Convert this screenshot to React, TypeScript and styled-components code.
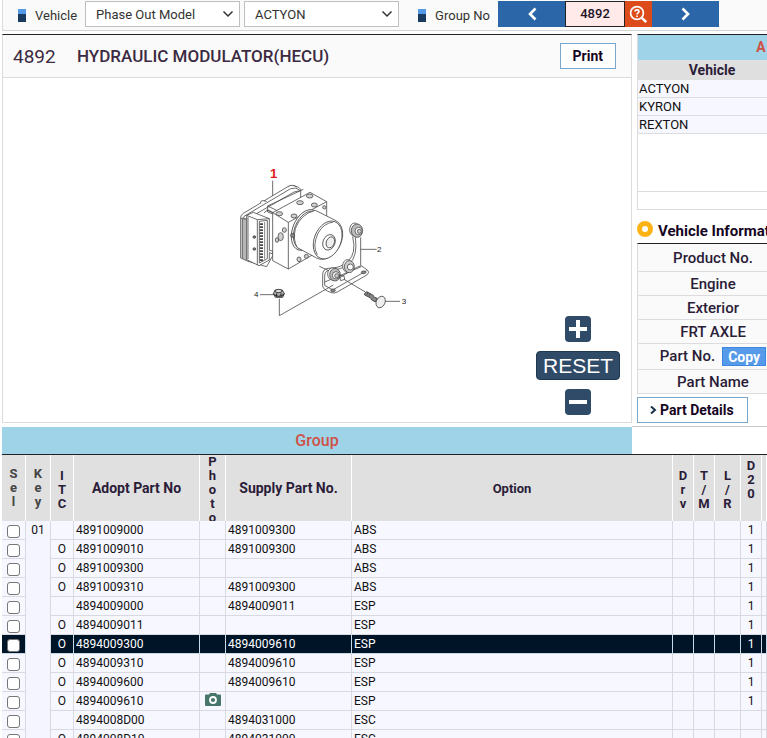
import React from "react";
import styled, { createGlobalStyle } from "styled-components";

const GlobalStyle = createGlobalStyle`
  * { box-sizing: border-box; }
  body {
    margin: 0;
    background: #fff;
    color: #111;
    font-family: Roboto, "Liberation Sans", sans-serif;
    font-size: 13px;
  }
  button, input, select { font-family: inherit; margin: 0; border-radius: 0; }
`;

const line = "#dcdcdf";
const blue = "#9fd3e8";
const navy = "#2f4b68";
const ink = "#2b1c38";

const Page = styled.div`
  height: 100vh;
  overflow: hidden;
  padding-left: 2px;
`;

const Toolbar = styled.header`
  display: flex;
  align-items: center;
  height: 31px;
  padding: 0 0 2px 15px;
  background: #fafafa;
  border-left: 1px solid ${line};
  border-bottom: 1px solid #d4d4d4;
`;

const FieldLabel = styled.label<{ $gap: number }>`
  display: flex;
  align-items: center;
  gap: 9px;
  padding-right: ${(p) => p.$gap}px;
  white-space: nowrap;
  color: #333;
  padding-top: 2px;
  &::before {
    content: "";
    width: 8px;
    height: 13px;
    background: linear-gradient(#5599e6 0 5px, #183a5c 5px);
  }
`;

const SelectBox = styled.div<{ $after: number }>`
  display: grid;
  align-items: center;
  width: 155px;
  height: 26px;
  margin-right: ${(p) => p.$after}px;
  > * { grid-area: 1 / 1; }
  svg { justify-self: end; margin-right: 6px; pointer-events: none; }
`;

const Select = styled.select`
  appearance: none;
  width: 100%;
  height: 26px;
  padding: 0 24px 0 10px;
  border: 1px solid #bfbfbf;
  background: #fff;
  color: #333;
  font-size: 13px;
`;

const Stepper = styled.div`
  display: flex;
  height: 26px;
  margin-left: 8px;
`;

const StepButton = styled.button<{ $search?: boolean }>`
  display: flex;
  align-items: center;
  justify-content: center;
  width: ${(p) => (p.$search ? 27 : 67)}px;
  padding: 0;
  border: 0;
  background: ${(p) => (p.$search ? "#dd4b1b" : "#2b67a8")};
`;

const GroupInput = styled.input`
  width: 60px;
  padding: 0 0 2px;
  border: 1px solid #222;
  background: #ffe9e9;
  color: #241326;
  font-size: 13px;
  font-weight: 500;
  text-align: center;
`;

const Upper = styled.div`
  display: flex;
  gap: 5px;
  padding-top: 3px;
`;

const Viewer = styled.section`
  display: flex;
  flex-direction: column;
  flex: 1 1 0;
  min-width: 0;
  height: 389px;
  border: 1px solid ${line};
  border-top-color: #222;
`;

const ViewerHead = styled.div`
  display: flex;
  align-items: center;
  height: 43px;
  padding: 0 15px 0 10px;
  background: #fafafa;
  border-bottom: 1px solid ${line};
`;

const GroupCode = styled.span`
  width: 64px;
  color: #3b2a42;
  font-size: 19px;
`;

const Title = styled.h1`
  flex: 1;
  margin: 0;
  color: #3b2a42;
  font-size: 17px;
  font-weight: 500;
  white-space: nowrap;
`;

const OutlineButton = styled.button`
  height: 26px;
  padding: 0 12px;
  border: 1px solid #7ba6cb;
  background: #fff;
  color: #16051f;
  font-size: 14px;
  font-weight: 700;
  white-space: nowrap;
`;

const Canvas = styled.div`
  position: relative;
  flex: 1;
  display: flex;
  align-items: center;
  justify-content: center;
  padding: 0 0 20px 5px;
`;

const ZoomControls = styled.div`
  position: absolute;
  right: 11px;
  bottom: 7px;
  display: flex;
  flex-direction: column;
  align-items: center;
  gap: 9px;
`;

const ZoomButton = styled.button`
  display: flex;
  align-items: center;
  justify-content: center;
  width: 26px;
  height: 26px;
  padding: 0;
  border: 0;
  border-radius: 4px;
  background: ${navy};
`;

const ResetButton = styled(ZoomButton)`
  width: 84px;
  height: 29px;
  border: 1px solid #1f3850;
  color: #fff;
  font-family: "Liberation Sans", sans-serif;
  font-size: 21px;
`;

const Side = styled.aside`
  flex: 0 0 130px;
  overflow: hidden;
`;

const SideTable = styled.table`
  width: 250px;
  table-layout: fixed;
  border-spacing: 0;
  border-top: 1px solid #222;
  border-left: 1px solid ${line};
`;

const SideCaption = styled.th`
  height: 25px;
  padding: 0 3px 2px 0;
  background: ${blue};
  color: #cf5146;
  font-size: 14px;
  font-weight: 700;
`;

const SideHead = styled.th`
  height: 20px;
  padding: 0;
  background: #dfdfdf;
  color: ${ink};
  font-size: 14px;
  font-weight: 700;
`;

const SideCell = styled.td<{ $h?: number; $plain?: boolean }>`
  height: ${(p) => p.$h ?? 18}px;
  padding: 0 1px;
  background: ${(p) => (p.$plain ? "#fff" : "#f7f7ff")};
  border-bottom: 1px solid ${line};
  font-size: 13px;
  line-height: 15px;
`;

const SideTitle = styled.h2`
  display: flex;
  align-items: center;
  gap: 5px;
  height: 33px;
  margin: 0;
  padding-top: 8px;
  color: #16051f;
  font-size: 15px;
  font-weight: 700;
  white-space: nowrap;
`;

const Ring = styled.span`
  flex: none;
  width: 16px;
  height: 16px;
  margin-bottom: 4px;
  border: 5px solid #fbb414;
  border-radius: 50%;
`;

const InfoHead = styled.th<{ $h?: number }>`
  height: ${(p) => p.$h ?? 24}px;
  padding: 0;
  background: #fafafa;
  border-bottom: 1px solid ${line};
  color: ${ink};
  font-size: 15px;
  font-weight: 500;
  line-height: 18px;
  white-space: nowrap;
`;

const CopyButton = styled.button`
  width: 44px;
  height: 19px;
  margin-left: 7px;
  padding: 0;
  border: 1px solid #3f86e0;
  background: #559bea;
  color: #fff;
  font-size: 14px;
  font-weight: 700;
  vertical-align: middle;
`;

const DetailsButton = styled(OutlineButton)`
  display: flex;
  align-items: center;
  gap: 3px;
  width: 111px;
  margin-top: 3px;
`;

const GroupBar = styled.div`
  display: grid;
  grid-template-columns: minmax(0, 1fr) 135px;
  height: 31px;
  padding-top: 4px;
`;

const GroupTitle = styled.h2`
  display: flex;
  align-items: center;
  justify-content: center;
  margin: 0;
  background: ${blue};
  color: #cf5146;
  font-size: 16px;
  font-weight: 500;
`;

const GroupRest = styled.div`
  border-top: 1px solid #c4c8ca;
  margin-top: -1px;
`;

const Grid = styled.table`
  width: 100%;
  table-layout: fixed;
  border-spacing: 0;
  border-top: 1px solid #222;
`;

const Col = styled.col<{ $w?: number }>`
  width: ${(p) => (p.$w ? p.$w + "px" : "auto")};
`;

const Head = styled.th<{ $size?: number }>`
  height: 66px;
  padding: 0;
  background: #e0e0e0;
  border-right: 1px solid #fff;
  color: ${ink};
  font-size: ${(p) => p.$size ?? 14}px;
  font-weight: 700;
`;

const Stack = styled.div<{ $top: number; $soft?: boolean }>`
  height: 66px;
  padding-top: ${(p) => p.$top}px;
  overflow: hidden;
  color: ${(p) => (p.$soft ? "#444" : ink)};
  font-size: 13px;
  line-height: 14px;
  white-space: pre-line;
`;

const Row = styled.tr<{ $selected?: boolean }>`
  background: ${(p) => (p.$selected ? "#001428" : "#f7f7ff")};
  color: ${(p) => (p.$selected ? "#fff" : "#111")};
  --rule: ${(p) => (p.$selected ? "#c9d8e8" : "#d9d9e2")};
`;

const Cell = styled.td<{ $center?: boolean; $key?: boolean }>`
  height: 19px;
  padding: ${(p) => (p.$center ? "0" : "0 2px")};
  border-right: 1px solid ${(p) => (p.$key ? "#d9d9e2" : "var(--rule)")};
  border-bottom: 1px solid var(--rule);
  background: ${(p) => (p.$key ? "#f5f5ff" : "transparent")};
  color: ${(p) => (p.$key ? "#111" : "inherit")};
  font-size: 12px;
  line-height: 18px;
  text-align: ${(p) => (p.$center ? "center" : "left")};
  vertical-align: top;
  svg { display: block; margin: 1px auto 0; }
`;

const Check = styled.input`
  appearance: none;
  display: block;
  width: 13px;
  height: 13px;
  margin: 4px auto 0;
  border: 1px solid #767676;
  border-radius: 3px;
  background: #fff;
`;

type Part = [itc: boolean, adopt: string, supply: string, option: string, d20: string];

const parts: Part[] = [
  [false, "4891009000", "4891009300", "ABS", "1"],
  [true, "4891009010", "4891009300", "ABS", "1"],
  [true, "4891009300", "", "ABS", "1"],
  [true, "4891009310", "4891009300", "ABS", "1"],
  [false, "4894009000", "4894009011", "ESP", "1"],
  [true, "4894009011", "", "ESP", "1"],
  [true, "4894009300", "4894009610", "ESP", "1"],
  [true, "4894009310", "4894009610", "ESP", "1"],
  [true, "4894009600", "4894009610", "ESP", "1"],
  [true, "4894009610", "", "ESP", "1"],
  [false, "4894008D00", "4894031000", "ESC", ""],
  [true, "4894008D10", "4894031000", "ESC", ""],
];

const SELECTED = "4894009300";
const WITH_PHOTO = "4894009610";
const columns = [24, 25, 23, 126, 26, 126, 0, 21, 21, 26, 21, 5];

const Chevron = () => (
  <svg width="12" height="8" viewBox="0 0 12 8" fill="none" stroke="#333" strokeWidth="1.5">
    <path d="M1.5 1.5 6 6 10.5 1.5" />
  </svg>
);

const Arrow = ({ d }: { d: string }) => (
  <svg width="12" height="14" viewBox="0 0 12 14" fill="none" stroke="#fff" strokeWidth="2.6">
    <path d={d} />
  </svg>
);

const SearchIcon = () => (
  <svg width="19" height="19" viewBox="0 0 19 19" fill="none" stroke="#fff">
    <circle cx="8" cy="8" r="6.4" strokeWidth="1.7" />
    <path d="M12.8 12.8 17.2 17.2" strokeWidth="2.6" />
    <path d="M6 6.5C6 4.3 10 4.3 10 6.5 10 7.8 8 7.8 8 9.4M8 10.4v1.5" strokeWidth="1.6" />
  </svg>
);

const Camera = () => (
  <svg width="16" height="14" viewBox="0 0 16 14">
    <path d="M1 1.5h3L5 0h6l1 1.5h3q1 0 1 1V12q0 1-1 1H1q-1 0-1-1V2.500q0-1 1-1z" fill="#47776a" />
    <circle cx="8" cy="7" r="3" fill="none" stroke="#fff" strokeWidth="1.8" />
  </svg>
);

const Modulator = () => (
  <svg
    width="200"
    height="180"
    viewBox="0 0 600 540"
    fill="#fff"
    stroke="#484848"
    strokeWidth="2.4"
    strokeLinejoin="round"
    role="img"
    aria-label="Hydraulic modulator assembly"
  >
    <path d="M158 92V138M422 262V346M422 298H470M495 454H540M120 434H160" fill="none" />
    {/* control unit cover */}
    <path d="M62 205Q60 196 70 190L205 109Q222 102 236 112L242 118V165L140 350 84 334 62 324Z" />
    <path d="M66 207 72 199 212 116Q228 110 240 121M72 202V328M78 204V331M62 205 80 208 222 126 241 122" fill="none" />
    <path d="M67 204V326" fill="none" stroke="#777" strokeWidth="4" />
    <path d="M122 160q-2-8 8-8t12 6M205 112q2-8 12-6t12 6" />
    {/* connector */}
    <path d="M80 196 100 187 148 206V330L117 347 80 329Z" />
    <path d="M80 196 112 209 148 206M112 209V345M118 214 142 211V326L118 339ZM84 200V328" fill="none" />
    <path d="M124 220V334" fill="none" strokeWidth="10" strokeDasharray="5 4" />
    <path d="M134 216V328" fill="none" strokeWidth="2" />
    <circle cx="103" cy="261" r="4" fill="#777" />
    <circle cx="103" cy="297" r="4" fill="#777" />
    <path d="M148 300l10 4v8l-10-4M132 188l12-8 16 8M140 180l22 10" />
    {/* valve block */}
    <path d="M158 188 270 127 320 155V290L205 357 158 332Z" />
    <path d="M158 188 205 217 320 155M205 217V357M143 168 250 118M143 168V186L158 192M143 168 172 182" fill="none" />
    <g fill="#d0d0d0">
      <ellipse cx="178" cy="191" rx="10" ry="6" />
      <ellipse cx="222" cy="198" rx="9" ry="6" />
      <ellipse cx="240" cy="158" rx="10" ry="6" />
      <ellipse cx="269" cy="138" rx="10" ry="6" />
      <ellipse cx="283" cy="165" rx="9" ry="6" />
      <ellipse cx="193" cy="240" rx="6" ry="7" />
      <ellipse cx="182" cy="260" rx="8" ry="12" />
      <ellipse cx="171" cy="270" rx="5" ry="7" />
      <ellipse cx="237" cy="328" rx="6" ry="7" />
      <ellipse cx="259" cy="319" rx="6" ry="6" />
      <circle cx="313" cy="172" r="5" />
    </g>
    {/* motor */}
    <ellipse cx="258" cy="240" rx="40" ry="64" transform="rotate(22 258 240)" />
    <ellipse cx="262" cy="241" rx="38" ry="60" transform="rotate(22 262 241)" fill="none" />
    <path d="M286 181 348 212Q370 225 368 258 364 296 330 320 308 334 290 324L232 293Q218 270 226 236 242 192 286 181Z" />
    <ellipse cx="323" cy="270" rx="40" ry="59" transform="rotate(22 323 270)" />
    <path d="M292 314Q276 288 294 250 310 220 340 216" fill="none" />
    <ellipse cx="327" cy="277" rx="18" ry="24" transform="rotate(22 327 277)" />
    <ellipse cx="331" cy="277" rx="12" ry="17" transform="rotate(22 331 277)" fill="#eee" />
    <circle cx="218" cy="256" r="6" fill="#888" />
    {/* bracket */}
    <path d="M398 260Q410 310 384 334 360 356 324 355 308 357 308 374V408Q310 420 332 427 342 432 352 426L442 374Q448 368 444 362L424 347 410 352 348 390" />
    <path d="M406 262Q414 318 388 342 364 360 328 361 314 363 314 378V406L338 420 440 362M314 396 424 350" fill="none" />
    <ellipse cx="431" cy="367" rx="7" ry="4" fill="#888" />
    <ellipse cx="339" cy="421" rx="7" ry="4" fill="#888" />
    <g>
      <ellipse cx="404" cy="239" rx="15" ry="20" />
      <ellipse cx="411" cy="242" rx="17" ry="20" fill="#bbb" />
      <circle cx="416" cy="243" r="11" />
      <circle cx="418" cy="244" r="6" fill="#ccc" />
      <ellipse cx="382" cy="348" rx="14" ry="19" />
      <ellipse cx="388" cy="350" rx="15" ry="18" fill="#ccc" />
      <circle cx="391" cy="351" r="9" />
      <ellipse cx="339" cy="372" rx="16" ry="19" />
      <ellipse cx="345" cy="374" rx="16" ry="19" fill="#bbb" />
      <circle cx="348" cy="376" r="11" />
      <circle cx="350" cy="377" r="6" fill="#ccc" />
    </g>
    <path d="M358 376l14 2 2 10-12 4zM298 349 326 362M372 388 436 426M178 446V497L340 405" fill="none" />
    {/* bolt */}
    <path d="M434 430l6-5 20 11 0 4 12 5-6 11-12-7-2-5-18-9z" fill="#888" stroke="#333" />
    <path d="M444 426l-3 10M450 430l-3 10" />
    <ellipse cx="482" cy="456" rx="13" ry="18" transform="rotate(25 482 456)" fill="#eee" />
    {/* nut */}
    <path d="M160 431 165 420H187L193 431 188 442H166Z" fill="#aaa" stroke="#222" />
    <path d="M160 432Q176 446 193 432M170 430V440M183 430V440" fill="none" stroke="#222" strokeWidth="3" />
    <ellipse cx="176" cy="423" rx="10" ry="5" fill="#ddd" stroke="#222" />
    <g stroke="none" fill="#222" fontFamily="Liberation Sans, sans-serif" fontSize="24">
      <text x="150" y="83" fontSize="40" fontWeight="700" fill="#e01b1b">1</text>
      <text x="471" y="305">2</text>
      <text x="545" y="461">3</text>
      <text x="102" y="441">4</text>
    </g>
  </svg>
);

export default function App() {
  return (
    <Page>
      <GlobalStyle />
      <Toolbar>
        <FieldLabel $gap={8} htmlFor="model">Vehicle</FieldLabel>
        <SelectBox $after={4}>
          <Select id="model"><option>Phase Out Model</option></Select>
          <Chevron />
        </SelectBox>
        <SelectBox $after={19}>
          <Select aria-label="Vehicle name"><option>ACTYON</option></Select>
          <Chevron />
        </SelectBox>
        <FieldLabel $gap={0} htmlFor="group">Group No</FieldLabel>
        <Stepper>
          <StepButton aria-label="Previous group"><Arrow d="M9.500 1.500 4 7l5.500 5.500" /></StepButton>
          <GroupInput id="group" defaultValue="4892" />
          <StepButton $search aria-label="Search group"><SearchIcon /></StepButton>
          <StepButton aria-label="Next group"><Arrow d="M2.500 1.500 8 7l-5.500 5.500" /></StepButton>
        </Stepper>
      </Toolbar>

      <Upper>
        <Viewer>
          <ViewerHead>
            <GroupCode>4892</GroupCode>
            <Title>HYDRAULIC MODULATOR(HECU)</Title>
            <OutlineButton>Print</OutlineButton>
          </ViewerHead>
          <Canvas>
            <Modulator />
            <ZoomControls>
              <ZoomButton aria-label="Zoom in">
                <svg width="18" height="18" viewBox="0 0 18 18" stroke="#fff" strokeWidth="4"><path d="M0 9h18M9 0v18" /></svg>
              </ZoomButton>
              <ResetButton>RESET</ResetButton>
              <ZoomButton aria-label="Zoom out">
                <svg width="18" height="18" viewBox="0 0 18 18" stroke="#fff" strokeWidth="4"><path d="M0 9h18" /></svg>
              </ZoomButton>
            </ZoomControls>
          </Canvas>
        </Viewer>

        <Side>
          <SideTable>
            <colgroup><Col $w={148} /><Col /></colgroup>
            <thead>
              <tr><SideCaption colSpan={2}>A</SideCaption></tr>
              <tr><SideHead>Vehicle</SideHead><SideHead /></tr>
            </thead>
            <tbody>
              {["ACTYON", "KYRON", "REXTON"].map((name) => (
                <tr key={name}><SideCell>{name}</SideCell><SideCell /></tr>
              ))}
              <tr><SideCell $h={58} $plain colSpan={2} /></tr>
              <tr><SideCell $plain colSpan={2} /></tr>
            </tbody>
          </SideTable>
          <SideTitle><Ring />Vehicle Information</SideTitle>
          <SideTable>
            <colgroup><Col $w={150} /><Col /></colgroup>
            <tbody>
              <tr><InfoHead $h={28} scope="row">Product No.</InfoHead><InfoHead as="td" $h={28} /></tr>
              <tr><InfoHead scope="row">Engine</InfoHead><InfoHead as="td" /></tr>
              <tr><InfoHead scope="row">Exterior</InfoHead><InfoHead as="td" /></tr>
              <tr><InfoHead scope="row">FRT AXLE</InfoHead><InfoHead as="td" /></tr>
              <tr>
                <InfoHead $h={26} scope="row">Part No.<CopyButton>Copy</CopyButton></InfoHead>
                <InfoHead as="td" $h={26} />
              </tr>
              <tr><InfoHead scope="row">Part Name</InfoHead><InfoHead as="td" /></tr>
            </tbody>
          </SideTable>
          <DetailsButton>
            <svg width="7" height="8" viewBox="0 0 7 8" fill="none" stroke="#16324a" strokeWidth="2"><path d="M1 0.500 5 4 1 7.500" /></svg>
            Part Details
          </DetailsButton>
        </Side>
      </Upper>

      <GroupBar>
        <GroupTitle>Group</GroupTitle>
        <GroupRest />
      </GroupBar>

      <Grid>
        <colgroup>{columns.map((w, i) => <Col key={i} $w={w} />)}</colgroup>
        <thead>
          <tr>
            <Head><Stack $top={12} $soft>{"S\ne\nl"}</Stack></Head>
            <Head><Stack $top={12} $soft>{"K\ne\ny"}</Stack></Head>
            <Head><Stack $top={14}>{"I\nT\nC"}</Stack></Head>
            <Head>Adopt Part No</Head>
            <Head><Stack $top={0}>{"P\nh\no\nt\no"}</Stack></Head>
            <Head>Supply Part No.</Head>
            <Head $size={13}>Option</Head>
            <Head><Stack $top={14}>{"D\nr\nv"}</Stack></Head>
            <Head><Stack $top={14}>{"T\n/\nM"}</Stack></Head>
            <Head><Stack $top={14}>{"L\n/\nR"}</Stack></Head>
            <Head><Stack $top={4}>{"D\n2\n0"}</Stack></Head>
            <Head />
          </tr>
        </thead>
        <tbody>
          {parts.map(([itc, adopt, supply, option, d20], i) => (
            <Row key={adopt} $selected={adopt === SELECTED}>
              <Cell $center><Check type="checkbox" aria-label={`Select ${adopt}`} /></Cell>
              {i === 0 && <Cell $center $key rowSpan={parts.length}>01</Cell>}
              <Cell $center>{itc ? "O" : ""}</Cell>
              <Cell>{adopt}</Cell>
              <Cell $center>{adopt === WITH_PHOTO && <Camera />}</Cell>
              <Cell>{supply}</Cell>
              <Cell>{option}</Cell>
              <Cell />
              <Cell />
              <Cell />
              <Cell $center>{d20}</Cell>
              <Cell />
            </Row>
          ))}
        </tbody>
      </Grid>
    </Page>
  );
}
